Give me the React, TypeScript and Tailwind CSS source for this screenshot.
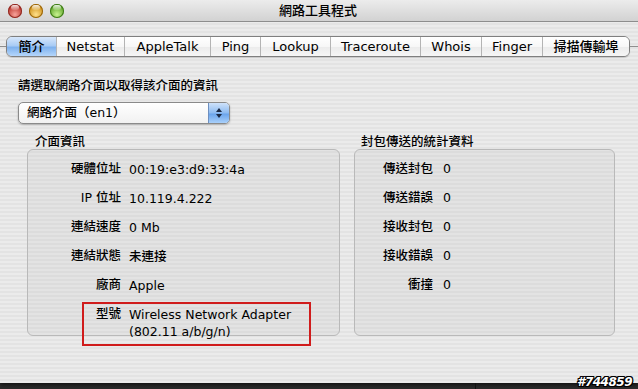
import React from "react";

const FONT = {
  fontFamily: '"DejaVu Sans", "Noto Sans CJK TC", sans-serif',
};

const tabs: { label: string; w: number; active?: boolean }[] = [
  { label: "簡介", w: 49, active: true },
  { label: "Netstat", w: 68 },
  { label: "AppleTalk", w: 86 },
  { label: "Ping", w: 50 },
  { label: "Lookup", w: 70 },
  { label: "Traceroute", w: 90 },
  { label: "Whois", w: 61 },
  { label: "Finger", w: 61 },
  { label: "掃描傳輸埠", w: 87 },
];

const leftRows: [string, string[]][] = [
  ["硬體位址", ["00:19:e3:d9:33:4a"]],
  ["IP 位址", ["10.119.4.222"]],
  ["連結速度", ["0 Mb"]],
  ["連結狀態", ["未連接"]],
  ["廠商", ["Apple"]],
  ["型號", ["Wireless Network Adapter", "(802.11 a/b/g/n)"]],
];

const rightRows: [string, string][] = [
  ["傳送封包", "0"],
  ["傳送錯誤", "0"],
  ["接收封包", "0"],
  ["接收錯誤", "0"],
  ["衝撞", "0"],
];

function Light({ from, to, border }: { from: string; to: string; border: string }) {
  return (
    <div
      className="w-[14px] h-[14px] rounded-full relative"
      style={{
        background: `radial-gradient(circle at 50% 75%, ${to} 0%, ${from} 80%)`,
        boxShadow: `inset 0 0 0 1px ${border}`,
      }}
    >
      <div className="absolute left-[3px] top-[1px] w-[8px] h-[5px] rounded-full bg-[linear-gradient(#ffffffdd,#ffffff22)]" />
    </div>
  );
}

export default function App() {
  return (
    <div
      className="relative w-[638px] h-[389px] overflow-hidden bg-[linear-gradient(#5a5a5a,#2b2b2b)] text-black font-medium"
      style={FONT}
    >
      <div className="flex flex-col h-[383px] bg-[repeating-linear-gradient(0deg,#ebebeb_0px,#ebebeb_2px,#e3e3e3_2px,#e3e3e3_4px)] shadow-[0_2px_4px_rgba(0,0,0,0.6)]">
        {/* Title bar */}
        <div className="relative flex items-center h-[22px] border-b border-[#8d8d8d] bg-[linear-gradient(#ececec,#d2d2d2)]">
          <div className="flex items-center gap-[7px] pl-[8px]">
            <Light from="#b3261e" to="#f7a39a" border="#8e2a22" />
            <Light from="#c8860c" to="#ffe08a" border="#99650b" />
            <Light from="#4f9a1c" to="#c8f28f" border="#3e7a18" />
          </div>
          <div className="flex-1 text-center text-[13px] leading-[22px] pr-[62px] -ml-[4px]">
            網路工具程式
          </div>
        </div>

        {/* Tab row */}
        <div className="flex items-center h-[21px] mt-[14px]">
          <div className="w-[6px] h-px bg-[#8e8e8e]" />
          <div className="flex h-[21px] border border-[#7f7f7f] rounded-[6px] overflow-hidden shadow-[0_1px_1px_rgba(0,0,0,0.15)]">
            {tabs.map((t, i) => (
              <div
                key={t.label}
                className={
                  "flex items-center justify-center text-[13px] leading-none " +
                  (i > 0 ? "border-l border-[#b4b4b4] " : "") +
                  (t.active
                    ? "bg-[linear-gradient(#d7e7fb_0%,#a9ccf5_45%,#7fb2ee_55%,#b5d6fb_100%)]"
                    : "bg-[linear-gradient(#ffffff_0%,#f7f7f7_50%,#ececec_55%,#f6f6f6_100%)]")
                }
                style={{ width: t.w }}
              >
                {t.label}
              </div>
            ))}
          </div>
          <div className="flex-1 h-px bg-[#8e8e8e]" />
        </div>

        {/* Body */}
        <div className="px-[18px] flex flex-col">
          <div className="mt-[21px] text-[12.5px] leading-[16px]">請選取網路介面以取得該介面的資訊</div>

          <div className="mt-[8px] flex w-[212px] h-[22px] rounded-[5px] border border-[#8a8a8a] bg-[linear-gradient(#ffffff,#f1f1f1)] shadow-[0_1px_2px_rgba(0,0,0,0.25)] overflow-hidden">
            <div className="flex-1 flex items-center pl-[8px] text-[12.5px]">網路介面（en1）</div>
            <div className="w-[21px] flex flex-col items-center justify-center gap-[2px] border-l border-[#6d8fc0] bg-[linear-gradient(#cfe2fa_0%,#8cbaf0_50%,#6aa4ec_55%,#a9d0fa_100%)]">
              <div className="w-0 h-0 border-l-[3px] border-r-[3px] border-b-[4px] border-l-transparent border-r-transparent border-b-[#1c2a44]" />
              <div className="w-0 h-0 border-l-[3px] border-r-[3px] border-t-[4px] border-l-transparent border-r-transparent border-t-[#1c2a44]" />
            </div>
          </div>

          <div className="mt-[11px] ml-[9px] flex gap-[14px]">
            {/* Left group */}
            <div className="flex flex-col w-[313px]">
              <div className="pl-[8px] text-[12.5px] leading-[14px] h-[14px]">介面資訊</div>
              <div className="h-[187px] rounded-[6px] border border-[#b9b9b9] bg-[repeating-linear-gradient(0deg,#e3e3e3_0px,#e3e3e3_2px,#dcdcdc_2px,#dcdcdc_4px)] pt-[10px]">
                <div className="grid grid-cols-[93px_1fr] gap-x-[8px] gap-y-[11px] text-[12.5px] leading-[18px]">
                  {leftRows.map(([k, v]) => (
                    <React.Fragment key={k}>
                      <div className="text-right">{k}</div>
                      <div className="leading-[17px] pt-[1px]">
                        {v.map((line) => (
                          <div key={line}>{line}</div>
                        ))}
                      </div>
                    </React.Fragment>
                  ))}
                </div>
              </div>
            </div>
            {/* Right group */}
            <div className="flex flex-col w-[261px]">
              <div className="pl-[7px] text-[12.5px] leading-[14px] h-[14px]">封包傳送的統計資料</div>
              <div className="h-[187px] rounded-[6px] border border-[#b9b9b9] bg-[repeating-linear-gradient(0deg,#e3e3e3_0px,#e3e3e3_2px,#dcdcdc_2px,#dcdcdc_4px)] pt-[10px]">
                <div className="grid grid-cols-[78px_1fr] gap-x-[10px] gap-y-[11px] text-[12.5px] leading-[18px]">
                  {rightRows.map(([k, v]) => (
                    <React.Fragment key={k}>
                      <div className="text-right">{k}</div>
                      <div>{v}</div>
                    </React.Fragment>
                  ))}
                </div>
              </div>
            </div>
          </div>
        </div>
      </div>

      {/* Red annotation box */}
      <div className="absolute left-[82px] top-[302px] w-[229px] h-[44px] border-2 border-[#d01c1c]" />

      {/* Other window edge */}
      <div className="absolute left-[475px] top-[383px] w-px h-[6px] bg-[#111]" />

      {/* Watermark */}
      <div
        className="absolute right-[6px] bottom-[0px] text-[12px] leading-[13px] font-bold italic text-white tracking-[-0.5px]"
        style={{
          fontFamily: '"DejaVu Sans", sans-serif',
          textShadow:
            "1px 0 0 #000, -1px 0 0 #000, 0 1px 0 #000, 0 -1px 0 #000, 1px 1px 0 #000, -1px -1px 0 #000, 1px -1px 0 #000, -1px 1px 0 #000",
        }}
      >
        #744859
      </div>
    </div>
  );
}
